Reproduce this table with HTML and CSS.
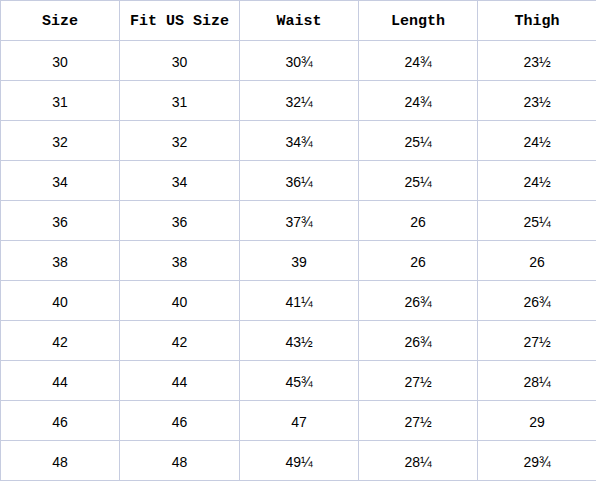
FILE: index.html
```html
<!DOCTYPE html>
<html>
<head>
<meta charset="utf-8">
<link rel="stylesheet" href="styles.css">
</head>
<body>
<table class="size-table">
  <colgroup>
    <col class="c1"><col class="c2"><col class="c3"><col class="c4"><col class="c5">
  </colgroup>
  <thead>
    <tr><th>Size</th><th>Fit US Size</th><th>Waist</th><th>Length</th><th>Thigh</th></tr>
  </thead>
  <tbody>
    <tr><td>30</td><td>30</td><td>30¾</td><td>24¾</td><td>23½</td></tr>
    <tr><td>31</td><td>31</td><td>32¼</td><td>24¾</td><td>23½</td></tr>
    <tr><td>32</td><td>32</td><td>34¾</td><td>25¼</td><td>24½</td></tr>
    <tr><td>34</td><td>34</td><td>36¼</td><td>25¼</td><td>24½</td></tr>
    <tr><td>36</td><td>36</td><td>37¾</td><td>26</td><td>25¼</td></tr>
    <tr><td>38</td><td>38</td><td>39</td><td>26</td><td>26</td></tr>
    <tr><td>40</td><td>40</td><td>41¼</td><td>26¾</td><td>26¾</td></tr>
    <tr><td>42</td><td>42</td><td>43½</td><td>26¾</td><td>27½</td></tr>
    <tr><td>44</td><td>44</td><td>45¾</td><td>27½</td><td>28¼</td></tr>
    <tr><td>46</td><td>46</td><td>47</td><td>27½</td><td>29</td></tr>
    <tr><td>48</td><td>48</td><td>49¼</td><td>28¼</td><td>29¾</td></tr>
  </tbody>
</table>
</body>
</html>
```

FILE: styles.css
```css
html, body {
  margin: 0;
  padding: 0;
  background: #ffffff;
}
.size-table {
  border-collapse: collapse;
  table-layout: fixed;
  width: 596px;
  color: #000;
}
.c1 { width: 119px; }
.c2 { width: 120px; }
.c3 { width: 119px; }
.c4 { width: 119px; }
.c5 { width: 119px; }
.size-table th,
.size-table td {
  border: 1px solid #c6cce0;
  padding: 0;
  text-align: center;
  vertical-align: middle;
}
.size-table th {
  font-family: "Liberation Mono", monospace;
  font-weight: bold;
  font-size: 15px;
  padding-top: 2px;
  height: 37px;
}
.size-table td {
  font-family: "Liberation Sans", sans-serif;
  font-size: 14px;
  padding-top: 2px;
  height: 37px;
}
```
